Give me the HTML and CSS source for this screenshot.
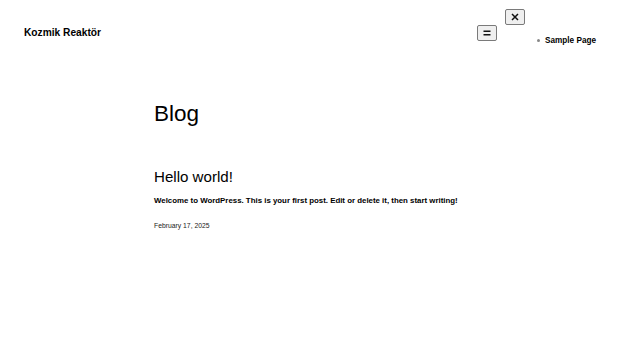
FILE: index.html
```html
<!DOCTYPE html>
<html lang="en">
<head>
<meta charset="utf-8">
<title>Kozmik Reaktör</title>
<link rel="stylesheet" href="styles.css">
</head>
<body>
<header class="site-header">
  <p class="site-title">Kozmik Reaktör</p>
  <nav class="site-nav">
    <button class="nav-btn nav-open" aria-label="Open menu">
      <svg width="10" height="8" viewBox="0 0 10 8" aria-hidden="true"><path d="M1.5 2.2H8.5M1.5 5.8H8.5" stroke="#111" stroke-width="1.5" fill="none"/></svg>
    </button>
    <div class="nav-container">
      <button class="nav-btn nav-close" aria-label="Close menu">
        <svg width="8" height="8" viewBox="0 0 8 8" aria-hidden="true"><path d="M1 1L7 7M7 1L1 7" stroke="#111" stroke-width="1.5" fill="none"/></svg>
      </button>
      <ul class="nav-list">
        <li class="nav-item">Sample Page</li>
      </ul>
    </div>
  </nav>
</header>
<main class="content">
  <h1 class="page-title">Blog</h1>
  <h2 class="post-title">Hello world!</h2>
  <p class="post-excerpt">Welcome to WordPress. This is your first post. Edit or delete it, then start writing!</p>
  <p class="post-date">February 17, 2025</p>
</main>
</body>
</html>
```

FILE: styles.css
```css
html, body {
  margin: 0;
  padding: 0;
  background: #fff;
  color: #000;
  font-family: "Liberation Sans", Arial, sans-serif;
}

.site-header {
  display: flex;
  justify-content: space-between;
  align-items: flex-start;
  height: 45px;
  box-sizing: border-box;
  padding: 9px 24px 0 24px;
}

.site-title {
  margin: 17.5px 0 0 0;
  font-size: 10.2px;
  line-height: 12px;
  font-weight: bold;
}

.site-nav {
  display: flex;
  align-items: flex-start;
  gap: 8px;
}

.nav-btn {
  display: flex;
  align-items: center;
  justify-content: center;
  box-sizing: border-box;
  width: 20px;
  height: 16px;
  padding: 0;
  margin: 0;
  background: #efefef;
  border: 1px solid #7a7a7a;
  border-radius: 2px;
}

.nav-open {
  margin-top: 16px;
}

.nav-container {
  display: flex;
  flex-direction: column;
  align-items: flex-start;
}

.nav-list {
  margin: 10.5px 0 0 0;
  padding-left: 40px;
  font-size: 8.2px;
  line-height: 9.5px;
  font-weight: bold;
  list-style: none;
}

.nav-item {
  display: flex;
  align-items: center;
}

.nav-item::before {
  content: "";
  width: 3px;
  height: 3px;
  border-radius: 50%;
  background: #888;
  margin: 0 5px 0 -8px;
  flex: none;
}

.content {
  display: flow-root;
  padding: 55px 0 0 154px;
}

.page-title {
  margin: 0;
  font-size: 22.5px;
  line-height: 27px;
  font-weight: normal;
}

.post-title {
  margin: 40.7px 0 0 0;
  font-size: 15.1px;
  line-height: 18px;
  font-weight: normal;
}

.post-excerpt {
  margin: 10px 0 0 0;
  font-size: 7.86px;
  line-height: 9.5px;
  font-weight: bold;
}

.post-date {
  margin: 16.5px 0 0 0;
  font-size: 6.8px;
  line-height: 8.2px;
  color: #222;
}
```
